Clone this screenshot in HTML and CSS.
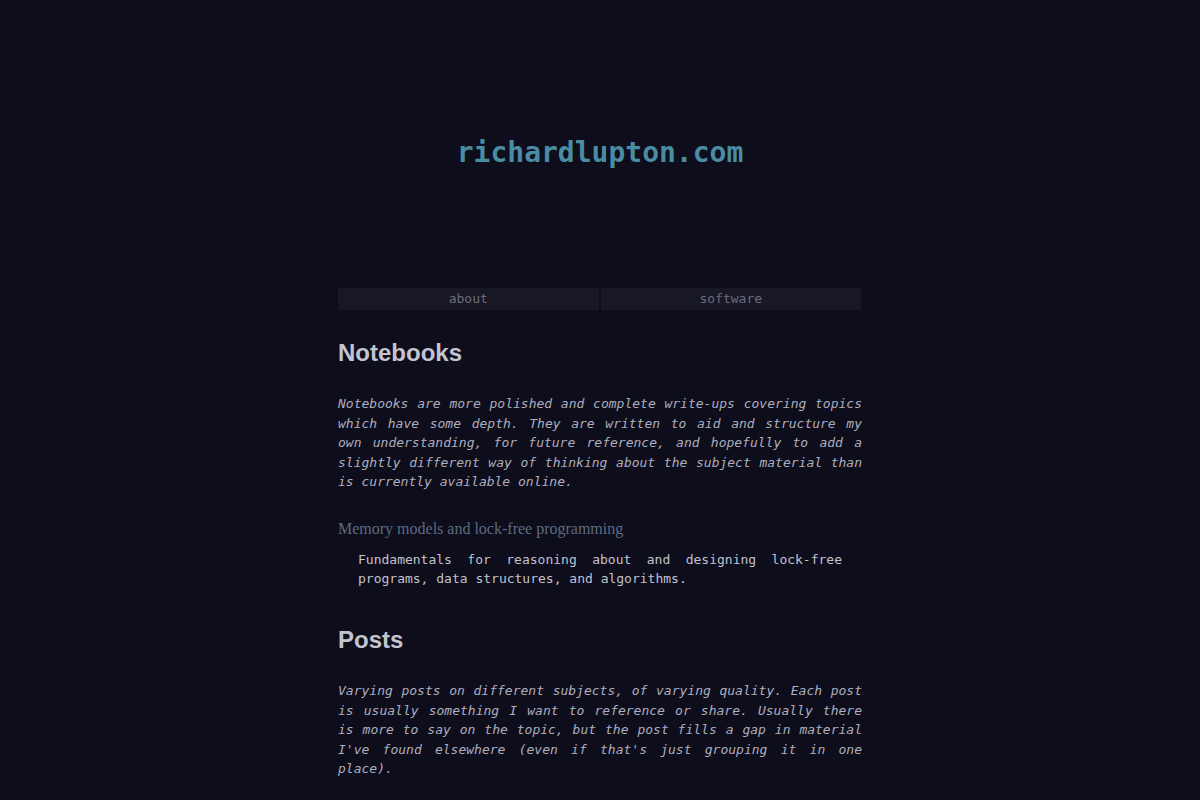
FILE: index.html
```html
<!DOCTYPE html>
<html lang="en">
<head>
<meta charset="utf-8">
<title>richardlupton.com</title>
<link rel="stylesheet" href="styles.css">
</head>
<body>
<header class="site-header">
  <h1 class="site-title">richardlupton.com</h1>
</header>
<div class="page">
  <nav class="nav">
    <a class="nav-item" href="#">about</a>
    <a class="nav-item" href="#">software</a>
  </nav>
  <section class="section">
    <h2 class="section-title">Notebooks</h2>
    <p class="section-intro">Notebooks are more polished and complete write-ups covering topics which have some depth. They are written to aid and structure my own understanding, for future reference, and hopefully to add a slightly different way of thinking about the subject material than is currently available online.</p>
    <a class="entry-title" href="#">Memory models and lock-free programming</a>
    <p class="entry-desc">Fundamentals for reasoning about and designing lock-free programs, data structures, and algorithms.</p>
  </section>
  <section class="section section-posts">
    <h2 class="section-title">Posts</h2>
    <p class="section-intro">Varying posts on different subjects, of varying quality. Each post is usually something I want to reference or share. Usually there is more to say on the topic, but the post fills a gap in material I've found elsewhere (even if that's just grouping it in one place).</p>
  </section>
</div>
</body>
</html>
```
FILE: styles.css
```css
html, body {
  margin: 0;
  padding: 0;
  background: #0d0d1c;
}
body {
  font-family: "DejaVu Sans Mono", monospace;
  font-size: 13px;
  color: #b4b4c2;
}
.site-header {
  padding: 136px 0 118px;
  text-align: center;
}
.site-title {
  margin: 0;
  font-family: "DejaVu Sans Mono", monospace;
  font-size: 28px;
  line-height: 34px;
  font-weight: bold;
  color: #4a8ca2;
}
.page {
  width: 524px;
  margin: 0 auto;
}
.nav {
  display: flex;
  gap: 2px;
  margin-bottom: 29px;
  padding-right: 1px;
}
.nav-item {
  flex: 1;
  height: 22px;
  line-height: 22px;
  text-align: center;
  background: #171726;
  color: #6c6c7c;
  text-decoration: none;
  font-size: 13px;
}
.section-title {
  margin: 0 0 27px;
  font-family: "Liberation Sans", Arial, sans-serif;
  font-size: 24px;
  line-height: 28px;
  font-weight: bold;
  color: #c4c4d0;
}
.section-intro {
  margin: 0;
  font-style: italic;
  line-height: 19.5px;
  text-align: justify;
  color: #aeaebe;
}
.entry-title {
  display: block;
  margin-top: 25.5px;
  font-family: "Liberation Serif", "Times New Roman", serif;
  font-size: 16px;
  line-height: 24px;
  color: #5f6a80;
  text-decoration: none;
}
.entry-desc {
  margin: 8.5px 0 0;
  padding: 0 20px;
  line-height: 19.5px;
  text-align: justify;
  color: #c2c2ce;
}
.section-posts {
  margin-top: 37.5px;
}
```
